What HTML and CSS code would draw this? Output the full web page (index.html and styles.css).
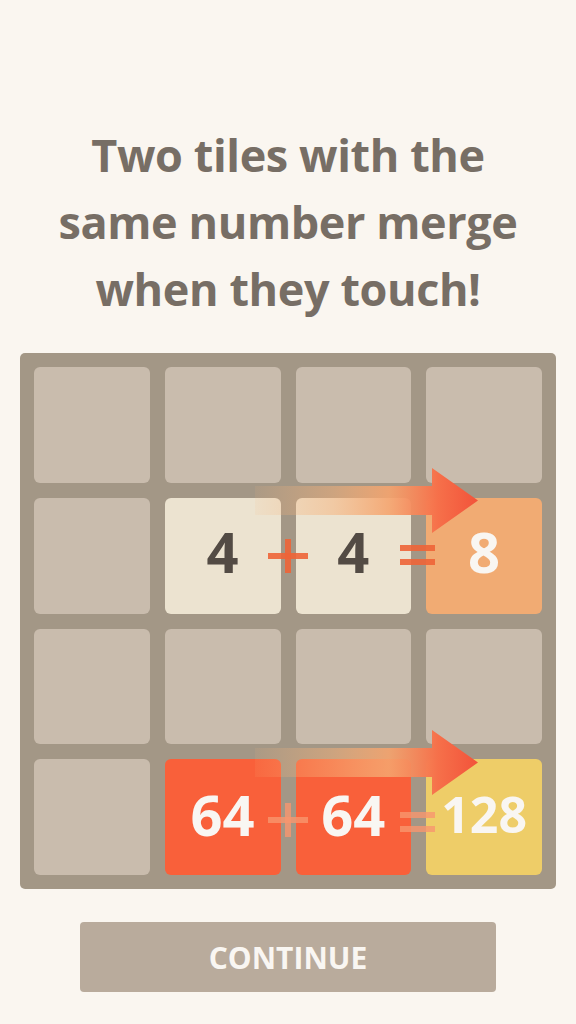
FILE: index.html
```html
<!DOCTYPE html>
<html lang="en">
<head>
    <meta charset="UTF-8">
    <meta name="viewport" content="width=device-width, initial-scale=1.0">
    <title>How to play</title>
    <link rel="stylesheet" href="styles.css">
</head>
<body>

<div class="screen">
    <h1 class="title">Two tiles with the<br>same number merge<br>when they touch!</h1>

    <div class="board">
        <div class="cell"></div>
        <div class="cell"></div>
        <div class="cell"></div>
        <div class="cell"></div>

        <div class="cell"></div>
        <div class="cell tile-4">4</div>
        <div class="cell tile-4">4</div>
        <div class="cell tile-8">8</div>

        <div class="cell"></div>
        <div class="cell"></div>
        <div class="cell"></div>
        <div class="cell"></div>

        <div class="cell"></div>
        <div class="cell tile-64">64</div>
        <div class="cell tile-64">64</div>
        <div class="cell tile-128">128</div>

        <!-- merge hints drawn over the tiles -->
        <svg class="arrow arrow-top" width="230" height="66" viewBox="0 0 230 66">
            <defs>
                <linearGradient id="arrowFade" x1="0" y1="0" x2="1" y2="0">
                    <stop offset="0" stop-color="#f7b47a" stop-opacity="0.1"/>
                    <stop offset="0.35" stop-color="#f6b078" stop-opacity="0.5"/>
                    <stop offset="0.6" stop-color="#f5a46e" stop-opacity="0.9"/>
                    <stop offset="0.82" stop-color="#f6704a"/>
                    <stop offset="1" stop-color="#f2533a"/>
                </linearGradient>
            </defs>
            <path d="M0 18 H177 V0 L223 32.5 L177 65 V47 H0 Z" fill="url(#arrowFade)"/>
        </svg>
        <svg class="arrow arrow-bottom" width="230" height="66" viewBox="0 0 230 66">
            <path d="M0 18 H177 V0 L223 32.5 L177 65 V47 H0 Z" fill="url(#arrowFade)"/>
        </svg>

        <span class="sign plus plus-top"></span>
        <span class="sign equals equals-top"></span>
        <span class="sign plus plus-bottom soft"></span>
        <span class="sign equals equals-bottom soft"></span>
    </div>

    <button class="continue">CONTINUE</button>
</div>

</body>
</html>
```

FILE: styles.css
```css
body {
    margin: 0;
    background: #faf6f0;
    font-family: 'Open Sans', 'Liberation Sans', sans-serif;
    color: #776e65;
}
.screen {
    display: flex;
    flex-direction: column;
    align-items: center;
}
.title {
    margin: 121px 0 31px;
    font-size: 45px;
    line-height: 67px;
    font-weight: 700;
    letter-spacing: -0.4px;
    text-align: center;
    color: #776e65;
}
.board {
    position: relative;
    box-sizing: border-box;
    width: 536px;
    height: 536px;
    padding: 14px;
    display: grid;
    grid-template-columns: repeat(4, 1fr);
    grid-template-rows: repeat(4, 1fr);
    gap: 15px;
    background: #a39786;
    border-radius: 5px;
}
.cell {
    display: flex;
    justify-content: center;
    align-items: center;
    padding-bottom: 10px;
    border-radius: 6px;
    background: #c9bcad;
    font-size: 56px;
    font-weight: 700;
    color: #f9f6f2;
}
.tile-4 {
    background: #ece3d0;
    color: #534b44;
}
.tile-8 {
    background: #f1ab73;
}
.tile-64 {
    background: #f9603a;
    padding-bottom: 6px;
}
.tile-128 {
    background: #eecd68;
    font-size: 50px;
    padding-bottom: 6px;
}
.arrow {
    position: absolute;
    left: 235px;
}
.arrow-top {
    top: 115px;
}
.arrow-bottom {
    top: 377px;
}
.sign {
    position: absolute;
    --sign: rgba(238, 100, 55, 0.9);
}
.sign.soft {
    --sign: rgba(248, 150, 110, 0.8);
}
.plus {
    width: 40px;
    height: 34px;
    left: 248px;
}
.plus::before,
.plus::after {
    content: "";
    position: absolute;
    background: var(--sign);
}
.plus::before {
    left: 0;
    right: 0;
    top: 14px;
    height: 6px;
}
.plus::after {
    top: 0;
    bottom: 0;
    left: 17px;
    width: 6px;
}
.plus-top {
    top: 186px;
}
.plus-bottom {
    top: 450px;
}
.equals {
    left: 380px;
    width: 35px;
    height: 20px;
    border-top: 6px solid var(--sign);
    border-bottom: 6px solid var(--sign);
    box-sizing: border-box;
}
.equals-top {
    top: 192px;
}
.equals-bottom {
    top: 459px;
}
.continue {
    margin-top: 33px;
    width: 416px;
    height: 70px;
    border: none;
    border-radius: 4px;
    background: #b9ab9c;
    color: #f9f6f2;
    font-family: inherit;
    font-size: 30px;
    font-weight: 700;
    cursor: pointer;
}
```
